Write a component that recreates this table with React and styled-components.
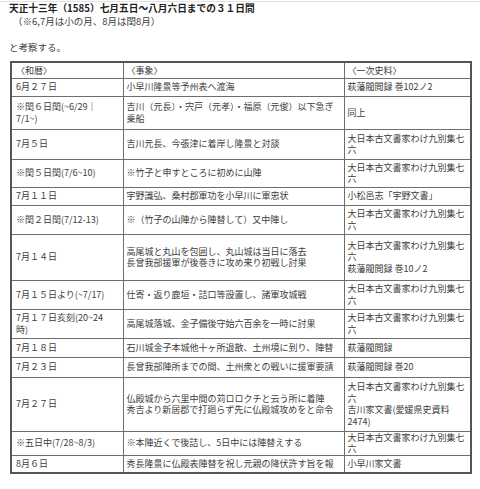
import React from 'react';
import styled, { createGlobalStyle } from 'styled-components';

const GlobalStyle = createGlobalStyle`
  html, body { margin: 0; padding: 0; background: #fff; }
  body {
    font-family: "Noto Sans CJK JP", "Noto Sans", sans-serif;
    color: #3c3c3c;
  }
`;

const Page = styled.div`
  width: 480px;
  height: 488px;
  box-sizing: border-box;
  margin-top: 1px;
  border-top: 1px solid #e2e2e2;
  padding: 0 11px 0 9px;
  font-size: 9px;
  line-height: 13px;
`;

const Title = styled.div`
  font-weight: bold;
  font-size: 9.7px;
  color: #222;
`;

const Note = styled.div`
  margin-left: 4px;
  margin-bottom: 13px;
  font-size: 9.5px;
`;

const Para = styled.div`
  font-size: 9.5px;
`;

const Table = styled.table`
  margin-top: 7px;
  margin-left: 1px;
  width: 460px;
  border-collapse: collapse;
  table-layout: fixed;
  border: 2px solid #555;
  line-height: 11.5px;
`;

const Row = styled.tr`
  height: ${p => p.$h}px;
`;

const Cell = styled.td`
  border: 1px solid #6e6e6e;
  padding: 0 3px 0 ${p => (p.$first ? 4 : 3)}px;
  vertical-align: middle;
  white-space: nowrap;
  overflow: visible;
`;

const SRC = '大日本古文書家わけ九別集七';

const rows = [
  { h: 16, d: ['〈和暦〉'], e: ['〈事象〉'], s: ['〈一次史料〉'] },
  { h: 18, d: ['6月２７日'], e: ['小早川隆景等予州表へ渡海'], s: ['萩藩閥閲録 巻102ノ2'] },
  { h: 33, d: ['※閏６日閏(~6/29｜', '7/1~)'], e: ['吉川（元長）・宍戸（元孝）・福原（元俊）以下急ぎ', '乗船'], s: ['同上'] },
  { h: 30, d: ['7月５日'], e: ['吉川元長、今張津に着岸し隆景と対談'], s: [SRC, '六'] },
  { h: 28, d: ['※閏５日閏(7/6~10)'], e: ['※竹子と申すところに初めに山陣'], s: [SRC, '六'] },
  { h: 18, d: ['7月１１日'], e: ['宇野識弘、桑村郡軍功を小早川に軍忠状'], s: ['小松邑志「宇野文書」'] },
  { h: 29, d: ['※閏２日閏(7/12-13)'], e: ['※（竹子の山陣から陣替して）又中陣し'], s: [SRC, '六'] },
  { h: 46, d: ['7月１４日'], e: ['高尾城と丸山を包囲し、丸山城は当日に落去', '長曾我部援軍が後巻きに攻め来り初戦し討果'], s: [SRC, '六', '萩藩閥閲録 巻10ノ2'] },
  { h: 29, d: ['7月１５日より(~7/17)'], e: ['仕寄・返り鹿垣・詰口等設置し、諸軍攻城戦'], s: [SRC, '六'] },
  { h: 29, d: ['7月１７日亥刻(20~24', '時)'], e: ['高尾城落城、金子備後守始六百余を一時に討果'], s: [SRC, '六'] },
  { h: 19, d: ['7月１８日'], e: ['石川城金子本城他十ヶ所退散、土州境に到り、陣替'], s: ['萩藩閥閲録'] },
  { h: 20, d: ['7月２３日'], e: ['長曾我部陣所までの間、土州衆との戦いに援軍要請'], s: ['萩藩閥閲録 巻20'] },
  { h: 54, d: ['7月２７日'], e: ['仏殿城から六里中間の苅ロロクチと云う所に着陣', '秀吉より新居郡で打廻らず先に仏殿城攻めをと命令'], s: [SRC, '六', '吉川家文書(愛媛県史資料', '2474)'] },
  { h: 23, d: ['※五日中(7/28~8/3)'], e: ['※本陣近くで後詰し、5日中には陣替えする'], s: [SRC, '六'] },
  { h: 18, d: ['8月６日'], e: ['秀長隆景に仏殿表陣替を祝し元親の降伏許す旨を報'], s: ['小早川家文書'] },
];

const Lines = ({ items }) =>
  items.map((t, i) => (
    <React.Fragment key={i}>
      {i > 0 && <br />}
      {t}
    </React.Fragment>
  ));

export default function App() {
  return (
    <>
      <GlobalStyle />
      <Page>
        <Title>天正十三年（1585）七月五日～八月六日までの３１日間</Title>
        <Note>（※6,7月は小の月、8月は閏8月）</Note>
        <Para>と考察する。</Para>
        <Table>
          <colgroup>
            <col style={{ width: 112 }} />
            <col style={{ width: 221 }} />
            <col style={{ width: 127 }} />
          </colgroup>
          <tbody>
            {rows.map((r, i) => (
              <Row key={i} $h={r.h}>
                <Cell $first><Lines items={r.d} /></Cell>
                <Cell><Lines items={r.e} /></Cell>
                <Cell><Lines items={r.s} /></Cell>
              </Row>
            ))}
          </tbody>
        </Table>
      </Page>
    </>
  );
}
